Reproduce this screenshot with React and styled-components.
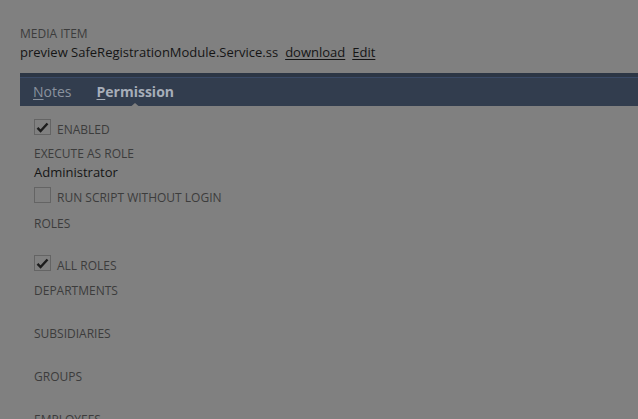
import * as React from 'react'
import styled, { createGlobalStyle } from 'styled-components'

const GlobalStyle = createGlobalStyle`
  html, body {
    margin: 0;
    padding: 0;
    background: #808080;
    font-family: "Open Sans", "Liberation Sans", sans-serif;
  }
`

const Page = styled.div`
  padding: 26px 0 0 20px;
  height: 419px;
  box-sizing: border-box;
  overflow: hidden;
`

const Eyebrow = styled.div`
  font-size: 12px;
  line-height: 16px;
  color: #3c3c3c;
  text-transform: uppercase;
`

const Headline = styled.div`
  display: flex;
  gap: 7px;
  margin-top: 1px;
  font-size: 13px;
  line-height: 18px;
  color: #151515;
`

const HeadLink = styled.span`
  text-decoration: underline;
  text-underline-offset: 2px;
`

const TabBar = styled.div`
  position: relative;
  margin-top: 12px;
  height: 33px;
  box-sizing: border-box;
  background: #323d4e;
  border-top: 4px solid #2c3645;
  box-shadow: inset 0 1px 0 #3a4a66;
  display: flex;
  align-items: center;
  gap: 25px;
  padding: 0 0 0 13px;
`

const Tab = styled.div`
  position: relative;
  font-size: 14px;
  line-height: 20px;
  color: ${p => (p.$active ? '#a7aeb9' : '#8a929e')};
  font-weight: ${p => (p.$active ? 700 : 400)};

  u {
    text-underline-offset: 2px;
  }

  &::after {
    content: '';
    display: ${p => (p.$active ? 'block' : 'none')};
    position: absolute;
    left: 50%;
    bottom: -7px;
    margin-left: -7px;
    border-left: 7px solid transparent;
    border-right: 7px solid transparent;
    border-bottom: 6px solid #808080;
  }
`

const Form = styled.div`
  padding: 10px 0 0 14px;
  display: flex;
  flex-direction: column;
`

const CheckRow = styled.div`
  display: flex;
  align-items: center;
  gap: 6px;
  height: 22px;
  margin-top: ${p => p.$mt || 0}px;
`

const Box = styled.span`
  width: 15px;
  height: 14px;
  border: 1px solid #646464;
  display: flex;
  align-items: center;
  justify-content: center;
  flex: none;
`

const CheckText = styled.span`
  font-size: 12px;
  line-height: 18px;
  color: #3c3c3c;
  text-transform: uppercase;
  padding-top: 6px;
`

const Label = styled.div`
  font-size: 12px;
  line-height: 18px;
  color: #3c3c3c;
  text-transform: uppercase;
  margin-top: ${p => p.$mt || 0}px;
`

const Value = styled.div`
  font-size: 13px;
  line-height: 18px;
  color: #151515;
  min-height: ${p => p.$h || 18}px;
`

const Check = ({ checked, label, mt }) => (
  <CheckRow $mt={mt}>
    <Box>
      {checked && (
        <svg width="13" height="11" viewBox="0 0 13 11">
          <path d="M1.5 5.8 L4.6 9 L11.5 1.5" fill="none" stroke="#1c1c1c" strokeWidth="2.4" />
        </svg>
      )}
    </Box>
    <CheckText>{label}</CheckText>
  </CheckRow>
)

const App = () => (
  <Page>
    <GlobalStyle />
    <Eyebrow>Media Item</Eyebrow>
    <Headline>
      <span>preview SafeRegistrationModule.Service.ss</span>
      <HeadLink>download</HeadLink>
      <HeadLink>Edit</HeadLink>
    </Headline>
    <TabBar>
      <Tab><u>N</u>otes</Tab>
      <Tab $active><u>P</u>ermission</Tab>
    </TabBar>
    <Form>
      <Check checked label="Enabled" />
      <Label $mt={7}>Execute as role</Label>
      <Value>Administrator</Value>
      <Check label="Run script without login" mt={3} />
      <Label $mt={9}>Roles</Label>
      <Value />
      <Check checked label="All roles" mt={1} />
      <Label $mt={8}>Departments</Label>
      <Value $h={25} />
      <Label>Subsidiaries</Label>
      <Value $h={25} />
      <Label>Groups</Label>
      <Value $h={25} />
      <Label>Employees</Label>
    </Form>
  </Page>
)

export default App
